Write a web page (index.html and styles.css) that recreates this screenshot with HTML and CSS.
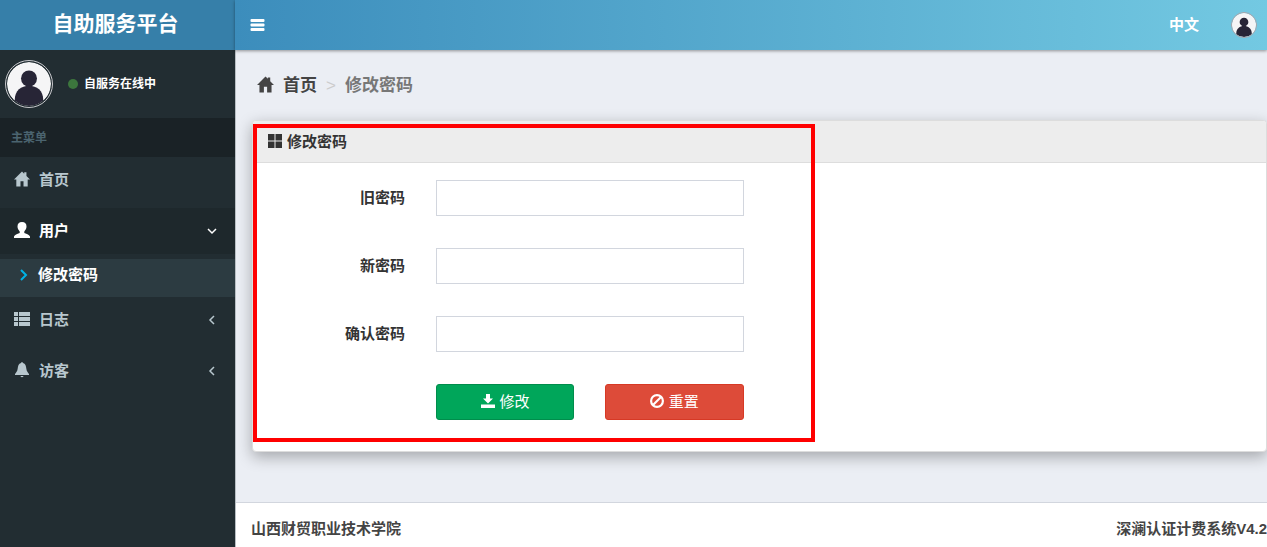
FILE: index.html
```html
<!DOCTYPE html>
<html lang="zh-CN">
<head>
<meta charset="utf-8">
<meta name="viewport" content="width=device-width, initial-scale=1">
<title>自助服务平台</title>
<link rel="stylesheet" href="styles.css">
</head>
<body>
<svg class="sprite" aria-hidden="true">
  <symbol id="home" viewBox="0 0 18 17"><path d="M9 0 11.500 2.500V1H14V5L18 9H15.400V17H10.700V11H7.300V17H2.600V9H0Z"/></symbol>
  <symbol id="person" viewBox="0 0 48 48"><circle cx="24" cy="24" r="24" fill="#f5f5f6"/><circle cx="24" cy="18" r="8.700"/><path d="M8.500 42.300V41C8.500 31 15.500 25.800 24 25.800S39.500 31 39.500 41V42.300A24 24 0 0 1 8.500 42.300Z"/></symbol>
</svg>
<header class="topbar">
  <a class="brand" href="#">自助服务平台</a>
  <nav class="navbar">
    <button class="toggle" type="button" aria-label="菜单"><svg viewBox="0 0 14 12"><rect width="14" height="3" rx="1"/><rect y="4.500" width="14" height="3" rx="1"/><rect y="9" width="14" height="3" rx="1"/></svg></button>
    <a class="language" href="#">中文</a>
    <a class="account" href="#" aria-label="账户"><svg><use href="#person"/></svg></a>
  </nav>
</header>
<div class="layout">
  <aside class="sidebar">
    <div class="user">
      <svg class="avatar"><use href="#person"/></svg>
      <span class="dot"></span><span>自服务在线中</span>
    </div>
    <div class="menu-title">主菜单</div>
    <nav class="menu">
      <a class="item" href="#"><svg class="icon"><use href="#home"/></svg><span>首页</span></a>
      <a class="item open" href="#"><svg class="icon" viewBox="0 0 16 16"><path d="M8 0C11 0 12.500 1.600 12.500 4.500C12.500 6.500 11.500 8 10.300 9.500V11C13 12 15.500 12.800 16 14.500V16H0V14.500C.5 12.800 3 12 5.700 11V9.500C4.500 8 3.500 6.500 3.500 4.500C3.500 1.600 5 0 8 0Z"/></svg><span>用户</span><svg class="arrow" viewBox="0 0 10 10"><path d="m1 3 4 4 4-4"/></svg></a>
      <a class="subitem" href="#"><svg class="pointer" viewBox="0 0 8 12"><path d="m1 1 5 5-5 5"/></svg><span>修改密码</span></a>
      <a class="item" href="#"><svg class="icon" viewBox="0 0 16 16"><path d="M0 1H4V5H0ZM5 1H16V5H5ZM0 6H4V10H0ZM5 6H16V10H5ZM0 11H4V15H0ZM5 11H16V15H5Z"/></svg><span>日志</span><svg class="arrow" viewBox="0 0 10 10"><path d="M7 1 3 5l4 4"/></svg></a>
      <a class="item" href="#"><svg class="icon" viewBox="0 0 16 16"><path d="M7 1Q8-1 9 1C11.500 1.800 12 4 12.300 6.500C12.600 9.500 14 10.500 15 12V13H1V12C2 10.500 3.400 9.500 3.700 6.500C4 4 4.500 1.800 7 1ZM6.300 14H9.700Q8 16.500 6.300 14Z"/></svg><span>访客</span><svg class="arrow" viewBox="0 0 10 10"><path d="M7 1 3 5l4 4"/></svg></a>
    </nav>
  </aside>
  <div class="page">
    <main class="content">
      <nav class="breadcrumb" aria-label="位置"><a href="#"><svg><use href="#home"/></svg>首页</a><span class="separator">&gt;</span><span>修改密码</span></nav>
      <section class="panel">
        <h1 class="panel-title"><svg viewBox="0 0 14 14"><path d="M0 0H6.500V6.500H0ZM7.500 0H14V6.500H7.500ZM0 7.500H6.500V14H0ZM7.500 7.500H14V14H7.500Z"/></svg>修改密码</h1>
        <form class="form">
          <label for="old">旧密码</label><input id="old" type="password">
          <label for="new">新密码</label><input id="new" type="password">
          <label for="confirm">确认密码</label><input id="confirm" type="password">
          <div class="actions">
            <button class="button save" type="button"><svg viewBox="0 0 14 14"><path d="M5 0H9V4.500H12L7 9.500 2 4.500H5ZM0 10.500H14V14H0Z"/></svg>修改</button>
            <button class="button reset" type="reset"><svg viewBox="0 0 14 14"><circle cx="7" cy="7" r="5.900" fill="none" stroke="currentColor" stroke-width="2.200"/><path d="m3 11 8-8" stroke="currentColor" stroke-width="2.200"/></svg>重置</button>
          </div>
        </form>
        <div class="highlight"></div>
      </section>
    </main>
    <footer class="footer"><span>山西财贸职业技术学院</span><span>深澜认证计费系统V4.2</span></footer>
  </div>
</div>
</body>
</html>
```
FILE: styles.css
```css
* { box-sizing: border-box; }
body {
  margin: 0;
  min-height: 100vh;
  display: flex;
  flex-direction: column;
  font: 15px/20px "Liberation Sans", "Noto Sans CJK SC", sans-serif;
  color: #333;
  overflow-x: hidden;
}
a { color: inherit; text-decoration: none; }
svg { fill: currentColor; flex: none; }
.sprite { position: absolute; width: 0; height: 0; }

.topbar {
  display: flex;
  height: 50px;
  color: #fff;
  font-weight: bold;
  position: relative;
  z-index: 1;
}
.brand {
  width: 235px;
  background: #367fa9;
  font-size: 21px;
  line-height: 48px;
  text-align: center;
  padding-right: 4px;
}
.navbar {
  flex: 1;
  display: flex;
  align-items: center;
  padding: 0 10px 1px 15px;
  background: linear-gradient(to right, #3c8dbc, #73c9e2);
  box-shadow: 0 1px 3px rgba(0, 0, 0, .4);
}
.toggle { padding: 0; border: 0; background: none; color: #fff; display: flex; }
.toggle svg { width: 15px; height: 12px; }
.language { margin-left: auto; }
.account { margin-left: 32px; display: flex; color: #272536; }
.account svg { width: 26px; height: 26px; border: 1px solid #aaa5aa; border-radius: 50%; }

.layout { flex: 1; display: flex; }
.sidebar { width: 235px; flex: none; background: #222d32; color: #b8c7ce; font-weight: bold; }
.user {
  display: flex;
  align-items: center;
  height: 68px;
  padding-left: 5px;
  color: #fff;
  font-size: 12px;
}
.avatar { width: 48px; height: 48px; border: 1px solid #c8c8cc; border-radius: 50%; padding: 1px; color: #272536; }
.dot { width: 10px; height: 10px; border-radius: 50%; background: #3c763d; margin: 0 6px 0 15px; }
.menu-title {
  background: #1a2226;
  color: #4b646f;
  font-size: 12px;
  padding: 10px 11px 9px;
}
.menu { display: flex; flex-direction: column; }
.item {
  display: flex;
  align-items: center;
  gap: 9px;
  height: 46px;
  padding: 0 18px 0 14px;
  margin-bottom: 5px;
}
.icon { width: 16px; height: 16px; margin-bottom: 2px; }
.arrow { width: 10px; height: 10px; margin-left: auto; stroke: currentColor; fill: none; stroke-width: 1.5; }
.open { background: #1e282c; color: #fff; }
.subitem {
  display: flex;
  align-items: center;
  gap: 10px;
  height: 38px;
  padding: 0 20px 6px;
  background: #2c3b41;
  color: #fff;
}
.pointer { width: 8px; height: 12px; stroke: #00b3e6; fill: none; stroke-width: 2; }

.page { flex: 1; min-width: 0; display: flex; flex-direction: column; background: #ebeef4; box-shadow: inset 1px 0 0 #b8bec3; }
.content { flex: 1; padding: 26px 0 16px 17px; }
.breadcrumb {
  display: flex;
  align-items: center;
  gap: 9px;
  padding: 0 5px;
  margin-bottom: 24px;
  font-size: 17px;
  font-weight: bold;
  color: #777;
}
.breadcrumb a { display: flex; align-items: center; gap: 9px; color: #444; }
.breadcrumb svg { width: 17px; height: 17px; margin-bottom: 3px; }
.separator { color: #ccc; font-weight: normal; }
.panel {
  position: relative;
  border: 1px solid #ddd;
  border-radius: 4px;
  background: #fff;
  box-shadow: 0 5px 15px rgba(0, 0, 0, .3);
}
.panel-title {
  display: flex;
  align-items: center;
  gap: 5px;
  margin: 0;
  padding: 11px 15px 10px;
  background: #ededed;
  border-bottom: 1px solid #ddd;
  font-size: 15px;
  line-height: 20px;
  border-radius: 3px 3px 0 0;
}
.panel-title svg { width: 14px; height: 14px; margin-bottom: 2px; }
.form {
  display: grid;
  grid-template-columns: 137px 1fr;
  column-gap: 31px;
  row-gap: 32px;
  align-items: center;
  width: 50%;
  padding: 17px 16px 31px 15px;
}
.form label { text-align: right; font-weight: bold; }
.form input { width: 100%; height: 36px; padding: 6px 12px; border: 1px solid #d2d6de; border-radius: 0; font: inherit; }
.actions { grid-column: 2; display: grid; grid-template-columns: 1fr 1fr; gap: 31px; }
.button {
  display: flex;
  align-items: center;
  justify-content: center;
  gap: 5px;
  height: 36px;
  border: 1px solid;
  border-radius: 3px;
  color: #fff;
  font: inherit;
}
.button svg { width: 14px; height: 14px; margin-bottom: 2px; }
.save { background: #00a65a; border-color: #008d4c; }
.reset { background: #dd4b39; border-color: #d73925; }
.highlight {
  position: absolute;
  inset: 3px auto 9px 0;
  width: 562px;
  border: 4px solid #f00;
  pointer-events: none;
}
.footer {
  display: flex;
  justify-content: space-between;
  padding: 16px 0 8px 15px;
  margin-left: 1px;
  background: #fff;
  border-top: 1px solid #d2d6de;
  color: #444;
  font-weight: bold;
}
```
